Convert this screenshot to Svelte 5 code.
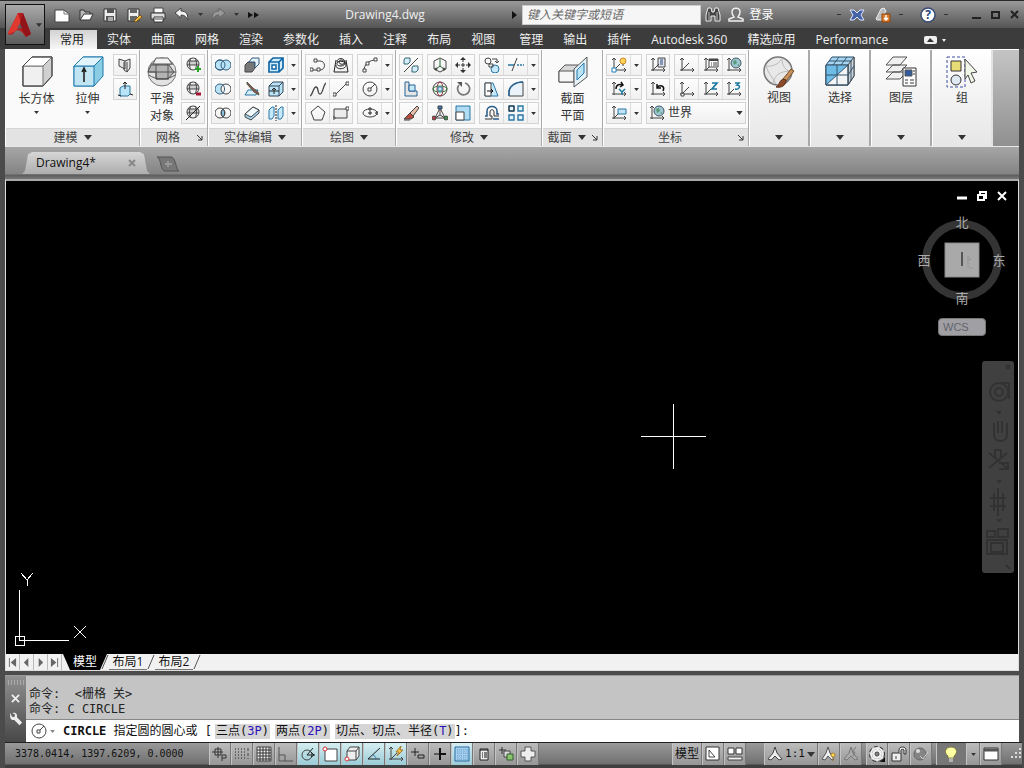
<script lang="ts">
    type Panel = {
        title: string;
        rows: string[][][];
        big?: { icon: string; label: string; menu?: boolean }[];
        menu?: boolean;
        launcher?: boolean;
        world?: boolean;
    };

    const axes = '<path d="M3 1v13M1 13h14M1 3l2-2 2 2M13 11l2 2-2 2"/>';
    const globe = '<circle cx="8" cy="7" r="6" fill="#f2f2f2"/><path d="M3 4h10v4H3z" fill="#cfcfcf" stroke="none"/><path d="M2 8h12M3 4h10M6 1c-2 4-2 8 0 12M10 1c2 4 2 8 0 12"/>';
    const ball = '<circle cx="10" cy="6" r="5" fill="#9cc7d0" stroke="#456"/><path d="M7 4l3-1 1 3-3 2zM11 8l2-1v2z" fill="#5a9a78" stroke="none"/>';

    const icons: Record<string, string> = {
        new: '<path d="M1 3h9l5 4v8H1z" fill="#fff" stroke="#444"/><path d="M10 3v4h5" stroke="#777"/>',
        open: '<path d="M2 13V3h4l1 2h5v2" fill="#bbb" stroke="#333"/><path d="M2 13l4-6h9l-3 6z" fill="#fff" stroke="#333"/>',
        save: '<path d="M2 2h12v12H2z" fill="#eee" stroke="#333"/><path d="M5 2h7v4H5zM4 9h8v5H4z" fill="#555" stroke="none"/><path d="M6 11h5M6 13h5" stroke="#fff"/>',
        saveas: '<path d="M2 2h11v12H2z" fill="#eee" stroke="#333"/><path d="M4 2h7v4H4zM4 9h7v5H4z" fill="#666" stroke="none"/><path d="M8 14l6-6 2 2-6 5z" fill="#f1bd3a" stroke="#75531d"/>',
        print: '<path d="M4 1h9v5H4z" fill="#fff" stroke="#444"/><path d="M1 6h14v6H1z" fill="#ddd" stroke="#333"/><path d="M4 10h9v5H4z" fill="#fff" stroke="#333"/><path d="M5 12h7"/>',
        undo: '<path d="M1 6l6-5v3c5 0 7 3 7 9-2-3-3-5-7-5v3z" fill="#f2f2f2" stroke="#444"/>',
        redo: '<path d="M15 6L9 1v3c-5 0-7 3-7 9 2-3 3-5 7-5v3z" fill="#999" stroke="#666"/>',
        more: '<path d="M2 5l5 3-5 3zM8 5l5 3-5 3z" fill="#111" stroke="none"/>',
        find: '<path d="M3 1h3l1 4h2l1-4h3l2 7v6h-5V9H6v5H1V8z" fill="#444" stroke="#eee"/><path d="M4 5v8M12 5v8" stroke="#bbb"/>',
        user: '<path d="M4 5c0-5 8-5 8 0 0 3-1 4-2 5l5 2v2H1v-2l5-2C5 9 4 8 4 5z" fill="#777" stroke="#eee" stroke-width="1.5"/>',
        exchange: '<path d="M1 3h4l3 3 3-3h4l-3 5 3 5h-4l-3-3-3 3H1l3-5z" fill="#4562a8" stroke="#dbe4ff"/>',
        app360: '<path d="M1 12L6 2l3-1 2 3-3 5 3 4H2z" fill="#bbb" stroke="#eee"/><path d="M7 7h8v8H7z" fill="#dd7d2b" stroke="#8b430d"/><path d="M11 8v5M9 11l2 2 2-2" stroke="#fff" stroke-width="1.5"/>',
        help: '<circle cx="8" cy="8" r="7" fill="#fff" stroke="#384b72" stroke-width="1.5"/>',
        loft: '<path d="M2 2l6 2v8L2 9zM8 4l5-2v9l-3 4-3-2V5M10 5v10" fill="#e8e8e8"/>',
        presspull: '<path d="M3 7l3-2h7v8l-2 2H3z" fill="#b9e4f7" stroke="#28749b"/><path d="M8 8V1M6 3l2-2 2 2M1 14l3 1M13 13l3 1" stroke="#222"/>',
        meshmore: globe + '<path d="M13 9v6M10 12h6" stroke="#29a329" stroke-width="2"/>',
        meshless: globe + '<path d="M11 13h5" stroke="#a51432" stroke-width="3"/>',
        meshoff: globe + '<path d="M1 15L15 1" stroke="#222"/>',
        union: '<g stroke="#345f80" fill="#b9e4f7"><circle cx="5" cy="8" r="5"/><circle cx="11" cy="8" r="5"/></g><circle cx="5" cy="8" r="5" stroke="#345f80"/>',
        subtract: '<circle cx="5" cy="8" r="5" fill="#b9e4f7" stroke="#345f80"/><circle cx="11" cy="8" r="5" fill="#f8f8f8"/><path d="M8 4c2 2 2 6 0 8" stroke="#345f80"/>',
        intersect: '<circle cx="5" cy="8" r="5"/><circle cx="11" cy="8" r="5"/><path d="M8 4c2 2 2 6 0 8-2-2-2-6 0-8" fill="#8ccbed"/>',
        facemove: '<path d="M1 8l3-3h7v6l-3 4H1z" fill="#777"/><path d="M5 5l3-4h7v6l-4 4V5z" fill="#e4f2fa" stroke="#345a7a"/>',
        slice: '<path d="M1 14l3-5h10l-2 5z" fill="#d7edf8" stroke="#2876a5"/><path d="M3 1l6 6 5 4 1 3-5-3-7-8z" fill="#8c5a58" stroke="#554"/>',
        thicken: '<path d="M1 9l8-7 6 3v3l-8 7-6-3z" fill="#a4d8f2"/><path d="M1 9l8-7 6 3-8 7z" fill="#f2f9fd"/>',
        shell: '<path d="M1 5l4-4h10v10l-4 4H1zM1 5h10v10M11 5l4-4" fill="#d4edfa" stroke="#1067a6" stroke-width="1.7"/><path d="M4 8h4v4H4z" fill="#fff" stroke="#1067a6" stroke-width="1.5"/>',
        imprint: '<path d="M1 5l4-4h10v10l-4 4H1z" fill="#b9e4f7" stroke="#345"/><path d="M1 5h10v10M11 5l4-4" stroke="#345"/><path d="M1 10h10M6 7v6M4 9l2-2 2 2" stroke="#222"/>',
        separate: '<path d="M1 5l3-3h2v9l-2 3H1zM10 5l3-3h2v9l-2 3h-3z" fill="#c5e9fb" stroke="#2876a5"/><path d="M8 0v16" stroke="#222" stroke-dasharray="2 1"/>',
        polyline: '<path d="M1 13h9M5 4h5c6 0 6 9 0 9"/><path d="M0 11h3v3H0zM7 11h3v3H7zM4 2h3v3H4z" fill="#fff"/>',
        helix: '<path d="M3 3L1 15h14L13 3M4 5c0-5 8-4 8 0 0 3-6 3-6 0s6-2 6 1c0 4-9 4-8 0 1-3 9-2 9 2 0 5-11 5-10 0" stroke="#222"/>',
        arc: '<path d="M2 14C2 7 7 3 14 3"/><path d="M1 12h3v3H1zM4 5h3v3H4zM12 1h3v3h-3z" fill="#fff"/>',
        spline: '<path d="M0 15c3-1 3-9 6-9s1 7 4 7 3-9 6-11" stroke-width="1.3"/>',
        line: '<path d="M2 14L14 2"/><path d="M0 12h3v3H0zM13 1h3v3h-3z" fill="#fff"/>',
        circle: '<circle cx="8" cy="8" r="7"/><path d="M8 8l5-5"/><path d="M6 7h3v3H6z" fill="#fff"/>',
        polygon: '<path d="M8 1l7 6-3 8H4L1 7z"/>',
        rect: '<path d="M1 4h13v9H1z" fill="#ececec"/><path d="M0 12h2v2H0zM13 2h3v3h-3z" fill="#fff"/>',
        ellipse: '<ellipse cx="8" cy="8" rx="7" ry="4"/><path d="M7 3h2v2H7zM6 8h4M8 6v4M14 7h2v2h-2z" fill="#fff" stroke="#222"/>',
        pointpair: '<path d="M1 3l1-2h5v4L5 7H1zM9 11l1-2h5v4l-2 2H9z" fill="#d6edfa" stroke="#367"/><path d="M1 15L15 1"/>',
        gizmo3d: '<path d="M8 1l6 3v8l-6 3-6-3V4z"/><path d="M8 2v7l-4 3M8 9l4 3" stroke="#263"/><circle cx="4" cy="12" r="1" fill="#263"/><circle cx="12" cy="12" r="1" fill="#263"/>',
        move: '<path d="M8 1v4M8 11v4M1 8h4M11 8h4" stroke="#333"/><path d="M8 0l3 3H5zM8 16l3-3H5zM0 8l3-3v6zM16 8l-3-3v6z" fill="#333" stroke="none"/><path d="M7 7h2v2H7z" stroke="#333"/>',
        copy: '<circle cx="4" cy="4" r="3"/><circle cx="11" cy="12" r="4" fill="#c5e9fb" stroke="#2876a5"/><path d="M8 2h5v4M11 4l2 2 2-2M5 7h4v3H5z"/>',
        trim: '<path d="M0 8h6M9 8h2M12 8h2M15 8h1" stroke="#2876a5" stroke-width="1.5"/><path d="M4 14L9 1"/>',
        align: '<path d="M2 1h4v9h8v5H2z" fill="#e5e5e5" stroke="#276293"/><path d="M6 4h6v6H6z" fill="#c5e9fb" stroke="#276293"/>',
        rotate3d: '<circle cx="8" cy="8" r="7"/><ellipse cx="8" cy="8" rx="3" ry="7" stroke="#a33040"/><ellipse cx="8" cy="8" rx="7" ry="3" stroke="#347e3c"/><path d="M6 6h4v4H6z" fill="#c5e9fb" stroke="#2876a5"/>',
        rotate: '<path d="M10 2a6 6 0 1 1-6 2" stroke="#777" stroke-width="1.7"/><path d="M2 1h5v5z" fill="#555" stroke="none"/>',
        stretch: '<path d="M1 2h8l5 13H1z" fill="#c5e9fb" stroke="#2876a5"/><path d="M1 2h6v13H1z" fill="#fff"/><path d="M3 10h6M7 8l2 2-2 2" stroke="#111"/>',
        fillet: '<path d="M1 15V10C2 5 7 1 15 1v14z" fill="#e9f3f9"/><path d="M1 15V10C2 5 7 1 15 1" stroke="#276293" stroke-width="1.5"/>',
        erase: '<path d="M1 14l6-6 4 4-3 2H1z" fill="#b94c3e"/><path d="M7 8l7-7 2 2-6 8z" fill="#e5bda8"/><path d="M1 15h6"/>',
        scale3d: '<path d="M8 3L3 13h10zM8 3v7l-5 3M8 10l5 3"/><path d="M6 1h4v3H6z" fill="#367ab8"/><circle cx="2" cy="13" r="2" fill="#b84040"/><circle cx="14" cy="13" r="2" fill="#3b914a"/>',
        scale: '<path d="M1 1h14v14H1z" fill="#afdcf2" stroke="#2876a5"/><path d="M1 7h8v8H1z" fill="#fff"/>',
        offset: '<path d="M1 14h7v-3H6V7c0-3 4-3 4 0v4h5" stroke="#333"/><path d="M1 11h2V6c0-6 10-6 10 0v3h2M9 14h6" stroke="#285a86" stroke-width="1.5"/>',
        array: '<path d="M1 1h5v5H1zM10 1h5v5h-5zM1 10h5v5H1zM10 10h5v5h-5z" fill="#e5f5fc" stroke="#2876a5" stroke-width="1.4"/><path d="M1 1h5v5H1z" stroke="#333"/>',
        ucsicon: axes + '<path d="M3 13l6-6"/><path d="M1 11h4v4H1z" fill="#fff" stroke="#1e80bc"/><circle cx="12" cy="4" r="3" fill="#ffd259" stroke="#d18a22"/><path d="M11 8h2"/>',
        ucsnamed: axes + '<path d="M3 13l6-6M8 1h7v9H8z" fill="#e0e4f1"/><path d="M10 3h3M10 5h3M10 7h3" stroke="#2b4a78"/>',
        ucs: axes + '<path d="M3 13l7-7"/>',
        ucslist: axes + '<path d="M3 13l5-5"/><path d="M6 2h9v8H6z" fill="#fff"/><path d="M6 3h9" stroke-width="2"/><path d="M8 6h1M10 6h4M8 8h1M10 8h4"/>',
        ucsworld: axes + ball,
        ucsrotate: axes + '<path d="M5 8c0-5 4-5 7-4M10 1l2 3-3 2" stroke="#111" stroke-width="1.5"/><path d="M8 8l3 3 3-3M11 11v3" stroke="#1779a0" stroke-width="1.5"/>',
        ucsprev: axes + '<path d="M7 6c5-3 8 0 6 4M7 3v4h4" stroke="#111" stroke-width="1.5"/>',
        ucsorigin: axes + '<path d="M3 13l7-7M2 12h3v3H2z" fill="#fff"/>',
        ucsz: axes + '<path d="M3 13l5-5"/><path d="M9 2h5L9 8h5" stroke="#1779a0" stroke-width="1.7"/>',
        ucs3: axes + '<path d="M3 13l5-5"/><path d="M9 2h4l-2 2c4 0 3 5-2 4" stroke="#1779a0" stroke-width="1.5"/>',
        ucsview: axes + '<path d="M3 13l5-5"/><path d="M7 4h8v5H7z" fill="#bfe3f7" stroke="#2876a5"/>',
        snapinfer: '<path d="M0 6h11M6 1v11M3 3h6v6H3zM10 15V9h4v3h-4" stroke="#333"/>',
        snap: '<path d="M1 3h12M1 6h12M1 9h12M1 12h12" stroke="#222" stroke-dasharray="1 2"/><path d="M14 2v11" stroke-dasharray="3 2"/>',
        grid: '<path d="M1 1h14v14H1z" fill="#eee"/><path d="M4 1v14M7 1v14M10 1v14M13 1v14M1 4h14M1 7h14M1 10h14M1 13h14" stroke="#333"/>',
        ortho: '<path d="M1 1v14h14M1 9h6v6" stroke="#555"/>',
        polar: '<circle cx="7" cy="9" r="5"/><path d="M7 9h8M7 9l6-7M11 6l3 3-3 2" stroke="#222"/>',
        osnap: '<path d="M3 3h12v12H3z" fill="#fff"/><circle cx="3" cy="3" r="2" fill="#fff" stroke="#d33"/>',
        osnap3d: '<path d="M3 5l3-4h9v9l-3 4H3z" fill="#eee"/><path d="M3 5h9v9M12 5l3-4"/><circle cx="3" cy="13" r="2" fill="#fff" stroke="#d33"/>',
        track: '<path d="M14 2L2 13h12" stroke="#222"/><path d="M7 9c2 1 3 2 3 4" stroke="#2876a5"/>',
        ducs: axes + '<path d="M3 13l6-6"/><path d="M13 0L8 6h3L9 10l6-6h-3z" fill="#f6c54b" stroke="#aa7720"/>',
        dyn: '<path d="M1 6h8M5 2v8M8 9h6v3H8z" stroke="#222"/>',
        lwt: '<path d="M2 8h6" stroke="#111"/><path d="M8 8h6M8 2v12" stroke="#111" stroke-width="2"/>',
        tpy: '<path d="M1 1h14v14H1z" fill="#a9d1ee" stroke="#2868a0"/><path d="M1 4h14M1 7h14M1 10h14M1 13h14M4 1v14M7 1v14M10 1v14M13 1v14" stroke="#6ca6d2" stroke-dasharray="1 1"/>',
        qp: '<path d="M4 3h8v11H4z" fill="#eee" stroke="#222"/><path d="M4 4h8M6 7h1M8 7h3M6 9h1M8 9h3M6 11h1M8 11h3" stroke="#111"/>',
        sc: '<path d="M1 4h7M4 1v7" stroke="#333"/><path d="M6 5h6v6H6z" fill="#ddd"/><path d="M9 8h6v6H9z" fill="#8ac56d" stroke="#315c2e"/>',
        am: '<path d="M5 1h6v4h4v6h-4v4H5v-4H1V5h4z" fill="#eee" stroke="#555"/>',
        layoutpaper: '<path d="M1 1h13v13H1z" fill="#fff" stroke="#333"/><path d="M4 4l6 7H4z"/>',
        quickview: '<path d="M1 2h6v6H1zM9 2h6v6H9z" fill="#fff" stroke="#333"/><path d="M1 11h14v3H1z" fill="#eee"/>',
        anno: '<path d="M8 1l2 6 5 6-3 1-4-4-4 4-3-1 5-6z" fill="#eee" stroke="#444"/>',
        annovis: '<path d="M7 1l2 6 4 6-2 1-4-4-3 4-3-1 4-6z" fill="#eee" stroke="#555"/><circle cx="12" cy="9" r="2" fill="#ffdd53" stroke="#ac8127"/><path d="M12 12v3" stroke="#9b752a"/>',
        annoauto: '<path d="M8 1l2 6 5 6-3 1-4-4-4 4-3-1 5-6z" fill="#aaa" stroke="#777"/><path d="M13 1l-4 5h3l-2 4" stroke="#777"/>',
        gear: '<circle cx="8" cy="8" r="6" stroke="#333" stroke-width="4" stroke-dasharray="3 2"/><circle cx="8" cy="8" r="6" stroke="#eee" stroke-width="2"/><circle cx="8" cy="8" r="5" fill="#eee" stroke="none"/><circle cx="8" cy="8" r="2" fill="#888" stroke="#444"/><path d="M16 11v5h-5z" fill="#111" stroke="none"/>',
        lock: '<path d="M1 7h9v8H1z" fill="#eee" stroke="#333"/><path d="M8 7V4c0-4 7-4 7 0v4h-2V4c0-1-3-1-3 0v3" fill="#eee" stroke="#333"/><path d="M5 10v3"/>',
        hardware: '<circle cx="7" cy="8" r="6" fill="#858585" stroke="#666"/><circle cx="5" cy="5" r="2" fill="#ddd" stroke="none"/><path d="M7 10l3 3 5-7" stroke="#ccc"/>',
        bulb: '<path d="M5 10C0 6 3 1 8 1s8 5 3 9v2H5z" fill="#ffffa4" stroke="#807e44"/><path d="M6 13h4M6 15h4" stroke="#eee"/>',
        clean: '<path d="M1 2h14v12H1z" fill="#fff" stroke="#333"/><path d="M1 4h14" stroke="#555" stroke-width="3"/>',
        wrench: '<path d="M2 1l1 4 3 1 1-3-3-2c4-1 6 2 5 5l6 6-3 3-6-6C2 10 0 5 2 1z" fill="#eee" stroke="none"/>'
    };

    const bigIcons: Record<string, string> = {
        box: '<path d="M4 12l9-9h20v19l-9 10H4z" fill="#d0d0d0"/><path d="M4 12h20v20H4z" fill="#f0f0f0" stroke="#777"/><path d="M4 12l9-9h20l-9 9z" fill="#fff" stroke="#777"/><path d="M33 3v19l-9 10H4V12l9-9z" stroke="#444"/>',
        extrude: '<path d="M4 12l9-9h20v19l-9 10H4z" fill="#8ccde6" stroke="#1c78ad"/><path d="M4 12h20v20H4z" fill="#c0e4f2" stroke="#1c78ad"/><path d="M4 12l9-9h20l-9 9z" fill="#e2f4fb" stroke="#1c78ad"/><path d="M14 28V15M12 18l2-4 2 4" stroke="#222" stroke-width="1.6"/>',
        smooth: '<circle cx="18" cy="18" r="14" fill="#e2e2e2" stroke="#777"/><path d="M13 11h12l5 7-6 7H12V18H4l3-7z" fill="#b3b3b3"/><path d="M7 10h22M4 18h28M12 25h13M12 25V12l3-8M24 25V12l-3-8M5 21c6 5 20 5 26 0"/><path d="M12 4h12l4 6H9z" fill="#f2f2f2"/>',
        section: '<path d="M4 17l6-6h13v10l-5 7H4z" fill="#d8d8d8"/><path d="M4 17h15v11H4z" fill="#f7f7f7"/><path d="M19 15L32 3v20L19 33z" fill="#e5f0f7" stroke="#555"/><path d="M22 16l7-7v10l-7 7z" fill="#b9e2f5" stroke="#1c78ad"/>',
        view: '<circle cx="17" cy="17" r="14" fill="#e8e8e8" stroke="#777" stroke-width="1.5"/><path d="M5 12c8 1 14-3 16-8M21 4c0 8 3 12 9 14M12 30c1-8 6-13 18-13M5 12c2 7 7 12 10 18" stroke="#bbb"/><path d="M33 17l-8 10-3-2 8-10z" fill="#c8925c" stroke="#7b4c28"/><path d="M25 26c0 6-5 8-10 7 4-2 2-5 7-8z" fill="#8e4b2a" stroke="#5c3019"/>',
        select: '<path d="M4 11l6-8h22v19l-6 9H4z" fill="#a6d6f2" stroke="#234b6b"/><path d="M26 11v20l6-9V3z" fill="#ccd3d9" stroke="#444"/><path d="M4 11h22v20H4z" fill="#f2f4f6"/><path d="M4 31V11h22z" fill="#6fbce6" stroke="none"/><path d="M4 11h22v20H4zM15 11v20M4 21h22M7 7h22v20M17 3l-6 8M25 3l-6 8M32 12l-6 9M4 31L26 11" stroke="#34536b"/>',
        layers: '<path d="M3 11l7-8h14l-7 8zM3 18l7-7h14l-7 7zM3 25l7-7h14l-7 7z" fill="#f0f0f0" stroke="#555"/><path d="M20 14h13v18H20z" fill="#fff" stroke="#333"/><path d="M22 16h7v6h-7z" fill="#335ba0"/><path d="M30 17h2M30 20h2M22 26h3M27 26h4M22 29h3M27 29h4" stroke="#333"/>',
        group: '<path d="M3 3h18v30H3z" stroke="#3f4fa5" stroke-dasharray="3 2"/><path d="M7 7h10v10H7z" fill="#e7dc76" stroke="#333"/><circle cx="12" cy="26" r="5" fill="#dfe9f4" stroke="#333"/><path d="M21 5l12 13-6 1 4 8-4 2-3-8-3 4z" fill="#f0f7e8" stroke="#444"/>'
    };

    const panels: Panel[] = [
        { title: '建模', menu: true, big: [{ icon: 'box', label: '长方体', menu: true }, { icon: 'extrude', label: '拉伸', menu: true }], rows: [[['loft']], [['presspull']]] },
        { title: '网格', launcher: true, big: [{ icon: 'smooth', label: '平滑\n对象' }], rows: [[['meshmore']], [['meshless']], [['meshoff']]] },
        { title: '实体编辑', menu: true, rows: [[['union'], ['facemove', 'shell', 'v']], [['subtract'], ['slice', 'imprint', 'v']], [['intersect'], ['thicken', 'separate', 'v']]] },
        { title: '绘图', menu: true, rows: [[['polyline', 'helix'], ['arc', 'v']], [['spline', 'line'], ['circle', 'v']], [['polygon', 'rect'], ['ellipse', 'v']]] },
        { title: '修改', menu: true, rows: [[['pointpair'], ['gizmo3d', 'move'], ['copy', 'trim', 'v']], [['align'], ['rotate3d', 'rotate'], ['stretch', 'fillet', 'v']], [['erase'], ['scale3d', 'scale'], ['offset', 'array', 'v']]] },
        { title: '截面', menu: true, launcher: true, big: [{ icon: 'section', label: '截面\n平面' }], rows: [] },
        { title: '坐标', launcher: true, world: true, rows: [[['ucsicon', 'v'], ['ucsnamed'], ['ucs', 'ucslist', 'ucsworld']], [['ucsrotate', 'v'], ['ucsprev'], ['ucsorigin', 'ucsz', 'ucs3']], [['ucsview', 'v']]] }
    ];

    const collapsed = [
        { icon: 'view', label: '视图' },
        { icon: 'select', label: '选择' },
        { icon: 'layers', label: '图层' },
        { icon: 'group', label: '组' }
    ];

    const tabGroups = [
        ['常用', '实体', '曲面', '网格', '渲染', '参数化', '插入', '注释', '布局', '视图'],
        ['管理', '输出', '插件', 'Autodesk 360', '精选应用', 'Performance']
    ];
    let activeTab = $state('常用');

    const modes = ['snapinfer', 'snap', 'grid', 'ortho', 'polar', 'osnap', 'osnap3d', 'track', 'ducs', 'dyn', 'lwt', 'tpy', 'qp', 'sc', 'am'];
    let activeModes = $state(['polar', 'osnap', 'osnap3d', 'track', 'ducs', 'tpy']);

    function toggleMode(mode: string) {
        activeModes = activeModes.includes(mode) ? activeModes.filter((m) => m !== mode) : [...activeModes, mode];
    }
</script>

{#snippet ico(name: string)}
    <svg class="ico" viewBox="0 0 16 16" aria-hidden="true">{@html icons[name]}</svg>
{/snippet}

{#snippet bigIco(name: string)}
    <svg class="big-ico" viewBox="0 0 36 36" aria-hidden="true">{@html bigIcons[name]}</svg>
{/snippet}

{#snippet arrow()}
    <svg class="arrow" viewBox="0 0 8 5" aria-hidden="true"><path d="M0 0h8L4 5z" /></svg>
{/snippet}

<div class="window">
    <header>
        <button class="app-button" aria-label="Application menu">
            <svg class="logo" viewBox="0 0 24 28" aria-hidden="true">
                <path d="M10 2h5l8 21-5 3-4-5c-4-3-7-2-9 2l-4 1-1-2z" fill="#b51c1c" />
                <path d="M10 2l3 10c-2 6-6 9-12 11l-1-1z" fill="#e03a30" />
                <path d="M12 12l3 6c-2-1-4-1-6 0z" fill="#5c5c5c" />
                <path d="M15 2l8 21-5 3-3-6-3-8z" fill="#921418" />
            </svg>
            {@render arrow()}
        </button>
        <div class="titlebar">
            <div class="quick">
                {#each ['new', 'open', 'save', 'saveas', 'print', 'undo'] as name}
                    <button aria-label={name}>{@render ico(name)}</button>
                {/each}
                <button class="drop" aria-label="undo list">{@render arrow()}</button>
                <button aria-label="redo">{@render ico('redo')}</button>
                <button class="drop" aria-label="redo list">{@render arrow()}</button>
                <button aria-label="more">{@render ico('more')}</button>
            </div>
            <h1>Drawing4.dwg</h1>
            <div class="info">
                <svg class="play" viewBox="0 0 5 8" aria-hidden="true"><path d="M0 0l5 4-5 4z" /></svg>
                <input class="search" type="text" placeholder="键入关键字或短语" aria-label="搜索">
                <button aria-label="find">{@render ico('find')}</button>
                <button class="login">{@render ico('user')}<span>登录</span></button>
                <div class="services">
                    <span class="dash"></span>
                    <button aria-label="exchange">{@render ico('exchange')}</button>
                    <button aria-label="a360">{@render ico('app360')}</button>
                    <span class="dash"></span>
                    <button class="help" aria-label="help">
                        {@render ico('help')}
                        <span>?</span>
                    </button>
                    <span class="dash"></span>
                </div>
                <div class="win-buttons">
                    <button aria-label="minimize"><svg viewBox="0 0 10 10"><path d="M0 8h9" /></svg></button>
                    <button aria-label="maximize"><svg viewBox="0 0 10 10"><path d="M1 2h7v6H1z" /></svg></button>
                    <button aria-label="close"><svg viewBox="0 0 10 10"><path d="M1 1l7 7M8 1L1 8" /></svg></button>
                </div>
            </div>
        </div>
        <nav class="tabs">
            {#each tabGroups as group}
                <div class="tab-group">
                    {#each group as tab}
                        <button class:active={activeTab === tab} onclick={() => (activeTab = tab)}>{tab}</button>
                    {/each}
                </div>
            {/each}
            <button class="collapse" aria-label="collapse ribbon">
                <svg viewBox="0 0 22 8"><rect width="13" height="8" rx="2" fill="#eee" /><path d="M3 6l3-4 4 4z" fill="#333" /><path d="M18 3h4l-2 3z" fill="#eee" /></svg>
            </button>
        </nav>
    </header>

    <div class="ribbon">
        {#each panels as panel}
            <section class="panel">
                <div class="panel-body">
                    {#each panel.big ?? [] as item}
                        <button class="big">
                            {@render bigIco(item.icon)}
                            <span>{item.label}</span>
                            {#if item.menu}{@render arrow()}{/if}
                        </button>
                    {/each}
                    {#if panel.rows.length}
                        <div class="tool-rows">
                            {#each panel.rows as row, i}
                                <div class="tool-row">
                                    {#each row as group}
                                        <div class="tool-group">
                                            {#each group as name}
                                                {#if name === 'v'}
                                                    <button class="drop" aria-label="more">{@render arrow()}</button>
                                                {:else}
                                                    <button aria-label={name}>{@render ico(name)}</button>
                                                {/if}
                                            {/each}
                                        </div>
                                    {/each}
                                    {#if panel.world && i === 2}
                                        <label class="world">
                                            {@render ico('ucsworld')}
                                            <select aria-label="UCS"><option>世界</option></select>
                                            {@render arrow()}
                                        </label>
                                    {/if}
                                </div>
                            {/each}
                        </div>
                    {/if}
                </div>
                <footer>
                    <span>{panel.title}</span>
                    {#if panel.menu}{@render arrow()}{/if}
                    {#if panel.launcher}
                        <svg class="launcher" viewBox="0 0 6 6" aria-hidden="true"><path d="M0 0l5 5M5 1v4H1" /></svg>
                    {/if}
                </footer>
            </section>
        {/each}
        {#each collapsed as item}
            <button class="collapsed">
                {@render bigIco(item.icon)}
                <span>{item.label}</span>
                {@render arrow()}
            </button>
        {/each}
    </div>

    <div class="doc-tabs">
        <div class="doc-tab">
            <button>Drawing4*</button>
            <button class="doc-close" aria-label="close"><svg viewBox="0 0 8 8"><path d="M1 1l6 6M7 1L1 7" /></svg></button>
        </div>
        <button class="doc-new" aria-label="new tab">
            <svg viewBox="0 0 24 16"><path d="M1 1h14c5 0 5 14 8 14H9C4 15 5 1 1 1z" fill="#777" stroke="#555" /><path d="M9 8h7M12 5v6" stroke="#999" stroke-width="2" /></svg>
        </button>
    </div>

    <main>
        <div class="canvas">
            <div class="view-tools">
                <div class="view-buttons">
                    <button aria-label="minimize"><svg viewBox="0 0 10 10"><path d="M0 7h10" stroke-width="3" /></svg></button>
                    <button aria-label="restore"><svg viewBox="0 0 10 10"><path d="M1 4h6v5H1zM3 3V1h6v6H8" stroke-width="2" /></svg></button>
                    <button aria-label="close"><svg viewBox="0 0 10 10"><path d="M1 1l8 8M9 1L1 9" stroke-width="2" /></svg></button>
                </div>
                <svg class="cube" viewBox="0 0 100 100">
                    <circle cx="50" cy="50" r="36" fill="none" stroke="#343434" stroke-width="8" />
                    <rect x="33" y="33" width="34" height="34" fill="#a9a9a9" stroke="#888" />
                    <path d="M50 42v14" stroke="#555" stroke-width="2" />
                    <path d="M56 46v12M57 49h3M57 58h4" stroke="#8c8c8c" stroke-dasharray="2 1" />
                    <text x="50" y="17">北</text>
                    <text x="50" y="93">南</text>
                    <text x="12" y="55">西</text>
                    <text x="87" y="55">东</text>
                </svg>
                <button class="wcs">WCS</button>
            </div>

            <div class="navbar">
                <svg viewBox="0 0 32 212" aria-hidden="true">
                    <path d="M24 4l4 4M28 4l-4 4" />
                    <circle cx="17" cy="31" r="9" />
                    <circle cx="17" cy="31" r="4" />
                    <path d="M17 22h10v16M15 50l2 2 2-2M12 62v12c0 8 13 8 13 0V62M16 60v12M20 60v12M7 92l18 15M7 107l18-15M13 97v-8h6v8M17 102h9v6h-9M15 119l2 2 2-2M16 127v28M8 137h16M8 145h16M12 132v18M21 132v18M15 158l2 2 2-2M5 170h8v6H5zM16 168h10v8H16zM5 179h20v14H5zM9 182h12v9H9zM24 204l4 4" />
                </svg>
            </div>

            <svg class="crosshair" viewBox="0 0 65 65" aria-hidden="true"><path d="M32 0v65M0 32h65" /></svg>

            <svg class="ucs" viewBox="0 0 78 76" aria-hidden="true">
                <path d="M5 18v50h50M1 64h9v9H1zM7 1l6 7 6-7M13 8v6M60 54l12 12M72 54L60 66" />
            </svg>
        </div>

        <div class="layout-tabs">
            <div class="nav-buttons">
                <button aria-label="first"><svg viewBox="0 0 10 10"><path d="M1 0h1v10H1zM9 0v10L3 5z" /></svg></button>
                <button aria-label="previous"><svg viewBox="0 0 10 10"><path d="M7 0v10L2 5z" /></svg></button>
                <button aria-label="next"><svg viewBox="0 0 10 10"><path d="M3 0v10l5-5z" /></svg></button>
                <button aria-label="last"><svg viewBox="0 0 10 10"><path d="M8 0h1v10H8zM1 0v10l6-5z" /></svg></button>
            </div>
            <button class="model">模型</button>
            <svg class="slash" viewBox="0 0 8 16"><path d="M1 15L7 1" /></svg>
            <button class="layout">布局1</button>
            <svg class="slash" viewBox="0 0 8 16"><path d="M1 15L7 1" /></svg>
            <button class="layout">布局2</button>
            <svg class="slash" viewBox="0 0 8 16"><path d="M1 15L7 1" /></svg>
        </div>
    </main>

    <div class="command">
        <div class="grip">
            <span class="dots"></span>
            <button aria-label="close"><svg viewBox="0 0 10 10"><path d="M1 1l8 8M9 1L1 9" /></svg></button>
            <button aria-label="customize">{@render ico('wrench')}</button>
        </div>
        <div class="console">
            <div class="history">
                <p>命令:  &lt;栅格 关&gt;</p>
                <p>命令: C CIRCLE</p>
            </div>
            <div class="prompt">
                <button class="recent" aria-label="recent commands">{@render ico('circle')}{@render arrow()}</button>
                <label for="cmd"><b>CIRCLE</b> 指定圆的圆心或 [</label>
                <button class="option">三点(<em>3P</em>)</button>
                <button class="option">两点(<em>2P</em>)</button>
                <button class="option">切点、切点、半径(<em>T</em>)</button>
                <span>]:</span>
                <input id="cmd" type="text">
            </div>
        </div>
    </div>

    <div class="status">
        <div class="coords">3378.0414, 1397.6209, 0.0000</div>
        <div class="modes">
            {#each modes as mode}
                <button class:on={activeModes.includes(mode)} aria-label={mode} onclick={() => toggleMode(mode)}>{@render ico(mode)}</button>
            {/each}
        </div>
        <div class="status-right">
            <div class="modes">
                <button class="text">模型</button>
                <button aria-label="layout">{@render ico('layoutpaper')}</button>
                <button aria-label="quick view">{@render ico('quickview')}</button>
            </div>
            <div class="modes">
                <button class="text scale">{@render ico('anno')}<span>1:1</span>{@render arrow()}</button>
                <button aria-label="annotation visibility">{@render ico('annovis')}</button>
                <button aria-label="auto scale">{@render ico('annoauto')}</button>
            </div>
            <div class="modes">
                <button aria-label="workspace">{@render ico('gear')}</button>
                <button aria-label="lock">{@render ico('lock')}</button>
                <button aria-label="hardware">{@render ico('hardware')}</button>
            </div>
            <div class="modes">
                <button class="bulb" aria-label="isolate">{@render ico('bulb')}</button>
                <button class="narrow" aria-label="status menu">{@render arrow()}</button>
                <button aria-label="clean screen">{@render ico('clean')}</button>
            </div>
            <svg class="resize" viewBox="0 0 12 12" aria-hidden="true"><path d="M9 1h2M5 5h2M9 5h2M1 9h2M5 9h2M9 9h2" /></svg>
        </div>
    </div>
</div>

<style>
    :global(body) {
        margin: 0;
        background: #4b4b4b;
    }
    .window {
        --ui: "Open Sans", "Noto Sans CJK SC", sans-serif;
        --mono: "DejaVu Sans Mono", "Noto Sans CJK SC", monospace;
        display: flex;
        flex-direction: column;
        height: 100vh;
        box-sizing: border-box;
        border-top: 1px solid #2a2a2a;
        font: 12px/16px var(--ui);
        color: #333;
        overflow: hidden;
    }
    button,
    input,
    select {
        font: inherit;
        color: inherit;
        margin: 0;
        padding: 0;
        border: 0;
        border-radius: 0;
        background: none;
        box-sizing: border-box;
    }
    button {
        display: flex;
        align-items: center;
        justify-content: center;
        white-space: nowrap;
        flex-shrink: 0;
    }
    svg {
        flex-shrink: 0;
        fill: none;
    }
    .ico {
        width: 16px;
        height: 16px;
        stroke: #444;
    }
    .big-ico {
        width: 36px;
        height: 36px;
        stroke: #555;
    }
    .arrow {
        width: 8px;
        height: 5px;
        fill: #333;
    }

    header {
        display: grid;
        grid-template-columns: 40px 1fr;
        grid-template-rows: 27px 21px;
        column-gap: 5px;
        padding-left: 5px;
        background: linear-gradient(#999, #858585 8px, #555 27px, #3c3c3c 27px);
        flex-shrink: 0;
    }
    .app-button {
        grid-row: span 2;
        margin: 3px 0 4px;
        gap: 4px;
        background: linear-gradient(#aaa, #5c5c5c);
        border: 1px solid #111;
    }
    .logo {
        width: 24px;
        height: 28px;
    }
    .app-button .arrow {
        width: 6px;
        height: 4px;
    }
    .titlebar {
        display: flex;
        align-items: center;
        min-width: 0;
    }
    .quick {
        display: flex;
        align-items: center;
    }
    .quick button {
        width: 24px;
        height: 24px;
    }
    .quick .drop {
        width: 12px;
    }
    .quick .arrow {
        width: 4px;
        height: 3px;
    }
    h1 {
        flex: 1;
        margin: 0;
        padding-right: 8px;
        font-size: 12px;
        font-weight: 400;
        text-align: center;
        color: #eee;
    }
    .info {
        display: flex;
        align-items: center;
        color: #fff;
    }
    .play {
        width: 5px;
        height: 8px;
        margin-right: 5px;
        fill: #111;
    }
    .search {
        width: 179px;
        height: 20px;
        padding: 0 4px;
        background: #f6f6f6;
        border: 1px solid #ccc;
        font-style: italic;
        color: #333;
    }
    .search::placeholder {
        color: #666;
    }
    .info button {
        width: 24px;
        height: 24px;
    }
    .info .login {
        width: 52px;
        gap: 5px;
    }
    .services {
        display: flex;
        align-items: center;
        margin-left: 58px;
        gap: 2px;
    }
    .dash {
        width: 4px;
        height: 1px;
        margin: 0 2px;
        background: #333;
    }
    .help {
        position: relative;
        margin-left: 9px;
    }
    .help span {
        position: absolute;
        inset: 4px 0;
        font-weight: 700;
        text-align: center;
        color: #284580;
    }
    .win-buttons {
        display: flex;
        margin-left: 17px;
    }
    .win-buttons button {
        width: 19px;
    }
    .win-buttons svg {
        width: 10px;
        height: 10px;
        stroke: #222;
        stroke-width: 2;
    }
    .tabs {
        display: flex;
        align-items: flex-end;
        gap: 4px;
        color: #eee;
    }
    .tab-group {
        display: flex;
    }
    .tab-group button {
        height: 19px;
        padding: 0 10px;
    }
    .tab-group .active {
        padding: 0 13px 0 10px;
        background: linear-gradient(#d2d2d2, #f7f7f7);
        color: #222;
    }
    .collapse {
        height: 19px;
        padding: 0 22px;
    }
    .collapse svg {
        width: 22px;
        height: 8px;
    }

    .ribbon {
        display: flex;
        margin: 0 5px;
        border-top: 1px solid #fff;
        border-bottom: 1px solid #e8e8e8;
        background: linear-gradient(#c4c4c4, #909090);
        flex-shrink: 0;
    }
    .panel {
        display: flex;
        flex-direction: column;
        border-left: 1px solid #fff;
        border-right: 1px solid #aaa;
        background: #fafafa;
    }
    .panel-body {
        display: flex;
        height: 74px;
        padding: 4px 2px 0;
    }
    .panel:first-child .panel-body {
        padding-left: 5px;
    }
    .panel footer {
        display: flex;
        align-items: center;
        justify-content: center;
        gap: 6px;
        height: 17px;
        padding: 0 4px;
        background: #e3e3e3;
        border-top: 1px solid #d4d4d4;
        color: #444;
    }
    .launcher {
        width: 6px;
        height: 6px;
        stroke: #333;
    }
    .panel footer span:nth-last-child(2) {
        margin-left: auto;
    }
    .panel footer span:nth-last-child(2) + .launcher {
        margin-left: auto;
    }
    .panel footer span:nth-last-child(2) + .arrow {
        margin-right: auto;
    }
    .big {
        flex-direction: column;
        justify-content: flex-start;
        min-width: 51px;
        line-height: 17px;
    }
    .big span {
        white-space: pre;
    }
    .panel:nth-child(2) .big {
        min-width: 38px;
    }
    .panel:nth-child(6) .big {
        min-width: 55px;
    }
    .big .arrow,
    .drop .arrow {
        width: 5px;
        height: 3px;
    }
    .big .arrow {
        margin-top: 4px;
    }
    .tool-rows {
        display: flex;
        flex-direction: column;
        gap: 2px;
    }
    .tool-row {
        display: flex;
        gap: 4px;
    }
    .tool-group {
        display: flex;
        height: 22px;
        box-sizing: border-box;
        border: 1px solid #d4d4d4;
        background: linear-gradient(#fdfdfd, #f0f0f0);
    }
    .tool-group button {
        width: 24px;
        border-left: 1px solid #dcdcdc;
    }
    .tool-group button:first-child {
        width: 23px;
        border-left: 0;
    }
    .tool-group button:last-child {
        width: 23px;
    }
    .tool-group button:only-child {
        width: 22px;
    }
    .tool-group .drop:last-child {
        width: 11px;
    }
    .world {
        display: flex;
        align-items: center;
        flex: 1;
        padding: 0 2px;
        border: 1px solid #d4d4d4;
        background: linear-gradient(#fdfdfd, #f0f0f0);
    }
    .world select {
        appearance: none;
        flex: 1;
        min-width: 0;
        height: 20px;
        padding-left: 3px;
    }
    .world .arrow {
        width: 7px;
        height: 4px;
    }
    .collapsed {
        flex-direction: column;
        justify-content: flex-start;
        width: 61px;
        padding: 4px 0 6px;
        background: linear-gradient(#fff, #e6e6e6);
        border-left: 1px solid #fff;
        border-right: 2px solid #aaa;
    }
    .collapsed:last-child {
        border-right-color: #e2e2e2;
    }
    .collapsed .arrow {
        margin-top: auto;
    }

    .doc-tabs {
        display: flex;
        align-items: flex-end;
        gap: 6px;
        height: 32px;
        margin: 0 5px;
        padding: 0 0 5px 17px;
        box-sizing: border-box;
        background: linear-gradient(#a6a6a6, #848484 27px, #5d5d5d 28px, #777 32px);
        flex-shrink: 0;
    }
    .doc-tab {
        display: flex;
        align-items: center;
        justify-content: space-between;
        width: 128px;
        height: 22px;
        padding: 0 14px;
        box-sizing: border-box;
        color: #111;
        background: linear-gradient(#d6d6d6, #adadad);
        clip-path: polygon(0 100%, 3px 85%, 6px 10%, 10px 0, 118px 0, 122px 10%, 125px 85%, 128px 100%);
    }
    .doc-close svg {
        width: 8px;
        height: 8px;
        stroke: #888;
        stroke-width: 2;
    }
    .doc-new svg {
        width: 24px;
        height: 20px;
    }

    main {
        display: flex;
        flex-direction: column;
        flex: 1;
        min-height: 0;
        margin: 0 5px;
        border: 1px solid #ddd;
        border-top: 2px solid #aaa;
    }
    .canvas {
        position: relative;
        flex: 1;
        min-height: 0;
        overflow: hidden;
        background: #000;
    }
    .view-tools {
        position: absolute;
        top: 0;
        right: 0;
        display: flex;
        flex-direction: column;
        align-items: center;
        width: 112px;
        padding-top: 5px;
    }
    .view-buttons {
        display: flex;
        align-self: flex-end;
        margin-right: 6px;
    }
    .view-buttons button {
        width: 20px;
        height: 20px;
    }
    .view-buttons svg {
        width: 10px;
        height: 10px;
        stroke: #fff;
    }
    .cube {
        width: 100px;
        height: 100px;
        margin-top: 4px;
    }
    .cube text {
        font: 13px var(--ui);
        fill: #aaa;
        text-anchor: middle;
    }
    .wcs {
        justify-content: flex-start;
        width: 48px;
        height: 18px;
        padding-left: 4px;
        margin-top: 8px;
        border: 1px solid #777;
        border-radius: 4px;
        background: #a0a0a4;
        font: 11px "Liberation Sans", sans-serif;
        color: #63636b;
    }
    .navbar {
        position: absolute;
        top: 180px;
        right: 4px;
        width: 32px;
        height: 212px;
        border-radius: 3px;
        background: #404040;
    }
    .navbar svg {
        width: 32px;
        height: 212px;
        stroke: #323232;
        stroke-width: 2;
    }
    .crosshair {
        position: absolute;
        left: 635px;
        top: 223px;
        width: 65px;
        height: 65px;
        stroke: #fff;
        shape-rendering: crispEdges;
    }
    .ucs {
        position: absolute;
        left: 8px;
        bottom: 6px;
        width: 78px;
        height: 76px;
        stroke: #fff;
        shape-rendering: crispEdges;
    }
    .layout-tabs {
        display: flex;
        height: 16px;
        background: #f1f1f1;
        color: #111;
    }
    .nav-buttons {
        display: flex;
    }
    .nav-buttons button {
        width: 14px;
        border-right: 1px solid #bbb;
    }
    .nav-buttons svg {
        width: 9px;
        height: 9px;
        fill: #666;
    }
    .model {
        width: 44px;
        margin: 0 -6px 0 1px;
        background: #000;
        color: #fff;
        clip-path: polygon(0 0, 100% 0, 37px 100%, 7px 100%);
    }
    .layout {
        width: 38px;
        border-bottom: 1px solid #777;
    }
    .slash {
        width: 8px;
        height: 16px;
        stroke: #555;
    }

    .command {
        display: flex;
        margin: 4px 5px 0;
        border-top: 1px solid #999;
        flex-shrink: 0;
    }
    .grip {
        display: flex;
        flex-direction: column;
        align-items: center;
        gap: 5px;
        width: 21px;
        padding-top: 4px;
        box-sizing: border-box;
        background: linear-gradient(#909090, #484848);
    }
    .dots {
        width: 16px;
        height: 5px;
        background: repeating-linear-gradient(90deg, #aaa 0 1px, transparent 1px 3px);
    }
    .grip button {
        height: 16px;
    }
    .grip button svg {
        width: 14px;
    }
    .grip button:first-of-type svg {
        width: 9px;
        stroke: #eee;
        stroke-width: 2;
    }
    .console {
        flex: 1;
        min-width: 0;
        font: 12px/15px var(--mono);
        color: #222;
    }
    .history {
        padding: 11px 3px 2px;
        background: #c4c4c4;
    }
    .history p {
        margin: 0;
        white-space: pre;
    }
    .prompt {
        display: flex;
        align-items: center;
        height: 23px;
        padding-left: 5px;
        border-top: 1px solid #888;
        box-sizing: border-box;
        background: #fff;
        color: #111;
    }
    .prompt label {
        margin-right: 3px;
        white-space: nowrap;
    }
    .recent {
        gap: 3px;
        margin-right: 8px;
    }
    .recent .arrow {
        width: 5px;
        height: 3px;
        fill: #888;
    }
    .option {
        margin-right: 5px;
        padding: 0 1px;
        background: #d5d5d5;
    }
    .option:last-of-type {
        margin-right: 0;
    }
    .option em {
        font-style: normal;
        color: #2a10b8;
    }
    .prompt input {
        flex: 1;
        min-width: 0;
        outline: 0;
    }

    .status {
        display: flex;
        align-items: center;
        height: 26px;
        margin: 0 2px 0 5px;
        padding-bottom: 3px;
        box-sizing: border-box;
        border-top: 1px solid #222;
        background: linear-gradient(#999, #707070 21px, #3f3f3f 22px);
        flex-shrink: 0;
    }
    .coords {
        width: 204px;
        padding-left: 10px;
        box-sizing: border-box;
        font: 10px/16px var(--mono);
        color: #111;
    }
    .modes {
        display: flex;
        height: 22px;
    }
    .modes button {
        width: 22px;
        border-left: 1px solid #c4c4c4;
        border-right: 1px solid #777;
        background: linear-gradient(#bcbcbc, #969696);
    }
    .modes .on {
        background: linear-gradient(#d5eef1, #9bcbd6);
    }
    .status-right {
        display: flex;
        align-items: center;
        gap: 4px;
        margin-left: auto;
    }
    .status-right .modes:first-child {
        margin-right: 14px;
    }
    .modes .text {
        width: 30px;
        color: #111;
    }
    .modes .scale {
        width: 54px;
        gap: 2px;
        font: 11px/16px var(--mono);
    }
    .modes .bulb {
        width: 30px;
        background: #777;
    }
    .modes .narrow {
        width: 14px;
    }
    .narrow .arrow {
        width: 5px;
        height: 3px;
    }
    .resize {
        width: 12px;
        height: 12px;
        margin-left: 4px;
        stroke: #ddd;
        stroke-width: 2;
    }
</style>
